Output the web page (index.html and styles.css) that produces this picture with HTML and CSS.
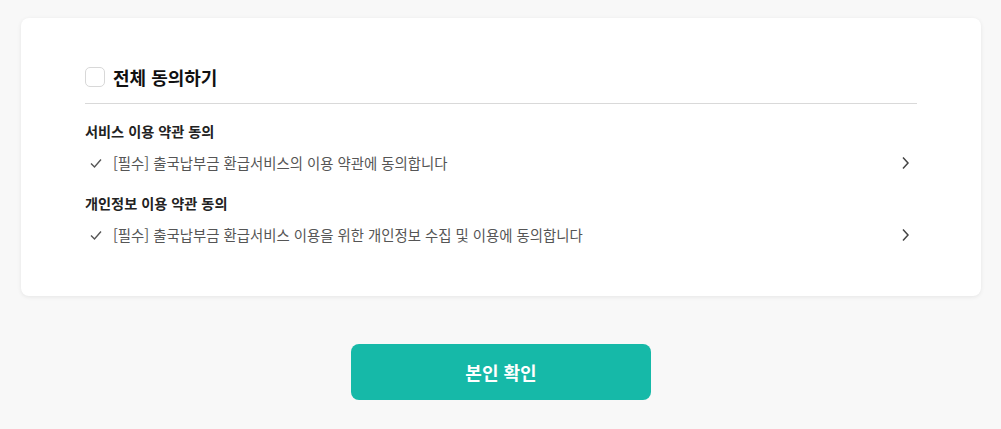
FILE: index.html
```html
<!DOCTYPE html>
<html lang="ko">
<head>
<meta charset="utf-8">
<link rel="stylesheet" href="styles.css">
</head>
<body>
<div class="page">
  <section class="card">
    <label class="all">
      <span class="box"></span>
      <span class="all-text">전체 동의하기</span>
    </label>
    <div class="divider"></div>
    <div class="group">
      <div class="group-title">서비스 이용 약관 동의</div>
      <div class="item">
        <svg class="check" width="14" height="14" viewBox="0 0 14 14"><path d="M2 7.5 L5.5 11 L12 3.5" fill="none" stroke="#555" stroke-width="1.4"/></svg>
        <span class="item-text">[필수] 출국납부금 환급서비스의 이용 약관에 동의합니다</span>
        <svg class="chev" width="16" height="16" viewBox="0 0 16 16"><path d="M6 2.5 L11 8 L6 13.5" fill="none" stroke="#444" stroke-width="1.5"/></svg>
      </div>
    </div>
    <div class="group">
      <div class="group-title">개인정보 이용 약관 동의</div>
      <div class="item">
        <svg class="check" width="14" height="14" viewBox="0 0 14 14"><path d="M2 7.5 L5.5 11 L12 3.5" fill="none" stroke="#555" stroke-width="1.4"/></svg>
        <span class="item-text">[필수] 출국납부금 환급서비스 이용을 위한 개인정보 수집 및 이용에 동의합니다</span>
        <svg class="chev" width="16" height="16" viewBox="0 0 16 16"><path d="M6 2.5 L11 8 L6 13.5" fill="none" stroke="#444" stroke-width="1.5"/></svg>
      </div>
    </div>
  </section>
  <button class="confirm">본인 확인</button>
</div>
</body>
</html>
```
FILE: styles.css
```css
* { box-sizing: border-box; }
html, body { margin: 0; padding: 0; }
body {
  background: #f8f8f8;
  font-family: "Noto Sans CJK KR", "Noto Sans", sans-serif;
  color: #222;
}
.page {
  padding: 18px 20px 0 21px;
  display: flex;
  flex-direction: column;
  align-items: center;
}
.card {
  width: 960px;
  align-self: flex-start;
  background: #fff;
  border-radius: 8px;
  box-shadow: 0 1px 4px rgba(0,0,0,0.08);
  padding: 48px 64px 51px;
}
.all {
  display: flex;
  align-items: center;
  gap: 8px;
  height: 22px;
}
.box {
  width: 20px;
  height: 20px;
  border: 1px solid #d8d8d8;
  border-radius: 5px;
  background: #fff;
}
.all-text {
  font-size: 18px;
  font-weight: 700;
  color: #111;
  line-height: 22px;
}
.divider {
  margin-top: 15px;
  height: 1px;
  background: #d9d9d9;
}
.group { margin-top: 17px; }
.group + .group { margin-top: 20px; }
.group-title {
  font-size: 14.2px;
  font-weight: 700;
  color: #222;
  line-height: 20px;
}
.item {
  margin-top: 12px;
  display: flex;
  align-items: center;
  height: 20px;
}
.check { margin-left: 4px; margin-right: 10px; }
.item-text {
  flex: 1;
  font-size: 14.4px;
  color: #555;
  line-height: 20px;
}
.chev { margin-right: 4px; }
.confirm {
  margin-top: 48px;
  width: 300px;
  height: 56px;
  border: none;
  border-radius: 8px;
  background: #16b9a8;
  color: #fff;
  font-family: "Noto Sans CJK KR", "Noto Sans", sans-serif;
  font-size: 18px;
  font-weight: 700;
}
```
